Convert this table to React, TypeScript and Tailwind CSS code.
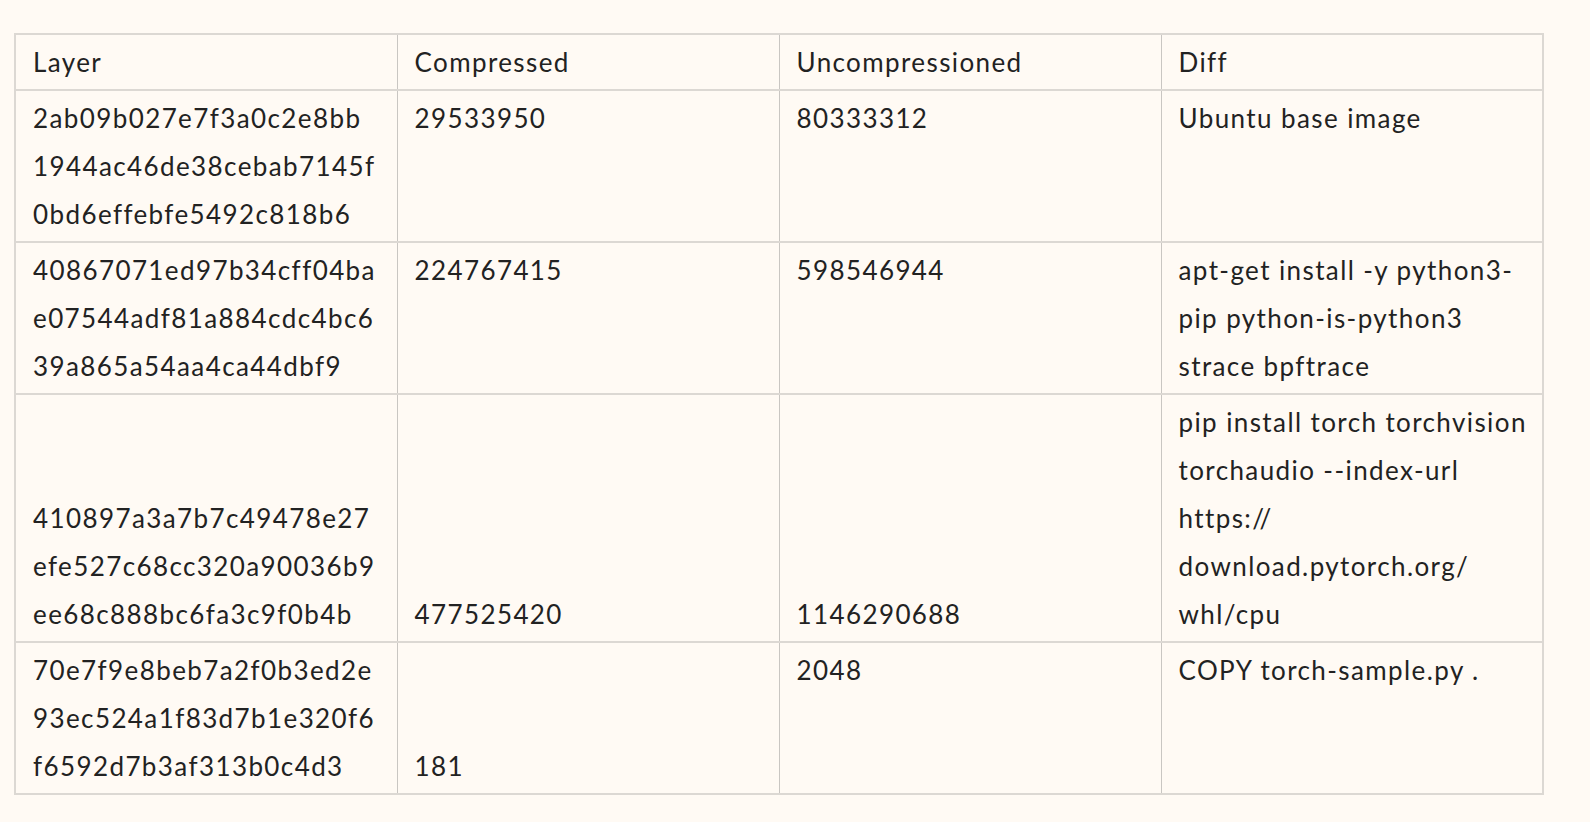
import React from "react";

type Cell = { lines: string[]; align: "top" | "bottom" };
type Row = Cell[];

const rows: Row[] = [
  [
    { lines: ["2ab09b027e7f3a0c2e8bb", "1944ac46de38cebab7145f", "0bd6effebfe5492c818b6"], align: "top" },
    { lines: ["29533950"], align: "top" },
    { lines: ["80333312"], align: "top" },
    { lines: ["Ubuntu base image"], align: "top" },
  ],
  [
    { lines: ["40867071ed97b34cff04ba", "e07544adf81a884cdc4bc6", "39a865a54aa4ca44dbf9"], align: "top" },
    { lines: ["224767415"], align: "top" },
    { lines: ["598546944"], align: "top" },
    { lines: ["apt-get install -y python3-", "pip python-is-python3", "strace bpftrace"], align: "top" },
  ],
  [
    { lines: ["410897a3a7b7c49478e27", "efe527c68cc320a90036b9", "ee68c888bc6fa3c9f0b4b"], align: "bottom" },
    { lines: ["477525420"], align: "bottom" },
    { lines: ["1146290688"], align: "bottom" },
    {
      lines: ["pip install torch torchvision", "torchaudio --index-url", "https://", "download.pytorch.org/", "whl/cpu"],
      align: "top",
    },
  ],
  [
    { lines: ["70e7f9e8beb7a2f0b3ed2e", "93ec524a1f83d7b1e320f6", "f6592d7b3af313b0c4d3"], align: "top" },
    { lines: ["181"], align: "bottom" },
    { lines: ["2048"], align: "top" },
    { lines: ["COPY torch-sample.py ."], align: "top" },
  ],
];

const headers = ["Layer", "Compressed", "Uncompressioned", "Diff"];

export default function App() {
  return (
    <div
      className="min-h-[822px] w-full bg-[#fffaf4] pl-[14px] pt-[33px] text-[#222222]"
      style={{ fontFamily: "Lato, 'Noto Sans', sans-serif" }}
    >
      <table className="w-[1530px] table-fixed border-collapse border-2 border-[#dcd8d3] text-[26px] leading-[48px] tracking-[1.4px]">
        <thead>
          <tr>
            {headers.map((h) => (
              <th
                key={h}
                className="border-x border-[#c9c6c2] border-b-2 border-b-[#dcd8d3] px-[17px] py-[3px] text-left align-top font-normal"
              >
                {h}
              </th>
            ))}
          </tr>
        </thead>
        <tbody>
          {rows.map((row, ri) => (
            <tr key={ri}>
              {row.map((cell, ci) => (
                <td
                  key={ci}
                  className={
                    "border-x border-[#c9c6c2] border-b-2 border-b-[#dcd8d3] px-[17px] py-[3px] " +
                    (cell.align === "top" ? "align-top" : "align-bottom")
                  }
                >
                  {cell.lines.map((l, li) => (
                    <span key={li} className="block whitespace-nowrap">
                      {l}
                    </span>
                  ))}
                </td>
              ))}
            </tr>
          ))}
        </tbody>
      </table>
    </div>
  );
}
